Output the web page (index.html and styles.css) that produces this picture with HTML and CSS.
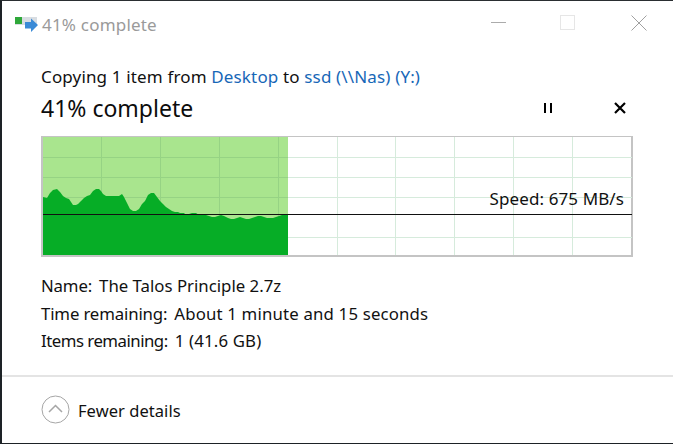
FILE: index.html
```html
<!DOCTYPE html>
<html lang="en">
<head>
<meta charset="utf-8">
<title>41% complete</title>
<link rel="stylesheet" href="styles.css">
</head>
<body>
<div class="window">
  <header class="titlebar">
    <svg class="app-icon" width="24" height="20" viewBox="0 0 24 20">
      <rect x="0" y="2" width="22" height="8" fill="#d8dde2"/>
      <rect x="0" y="2" width="7" height="7" fill="#2fa83a"/>
      <path d="M11 8h6V4.500l7 6.500-7 7v-3.500h-6z" fill="#3a8ad6" transform="translate(-1 -1)"/>
    </svg>
    <span class="title">41% complete</span>
    <div class="controls">
      <svg class="ctl" width="16" height="16" viewBox="0 0 16 16"><path d="M0 7.500h15" stroke="#ababab"/></svg>
      <svg class="ctl" width="16" height="16" viewBox="0 0 16 16"><rect x="0.500" y="0.500" width="14" height="14" fill="none" stroke="#e6e6e6"/></svg>
      <svg class="ctl ctl-close" width="16" height="16" viewBox="0 0 16 16"><path d="M0.500 0.500l15 15M15.500 0.500l-15 15" stroke="#a0a0a0"/></svg>
    </div>
  </header>
  <main class="content">
    <p class="copying">Copying 1 item from <a class="link">Desktop</a> to <a class="link">ssd (\\Nas) (Y:)</a></p>
    <div class="status-row">
      <h1 class="status">41% complete</h1>
      <div class="actions">
        <svg width="12" height="12" viewBox="0 0 12 12"><path d="M3 1v10M9 1v10" stroke="#000" stroke-width="2"/></svg>
        <svg width="14" height="14" viewBox="0 0 14 14"><path d="M2 2l10 10M12 2L2 12" stroke="#000" stroke-width="2.200"/></svg>
      </div>
    </div>
    <div class="graph">
      <svg class="graph-svg" width="589" height="118" viewBox="43 137 589 118" shape-rendering="crispEdges">
        <g class="grid-light">
          <path d="M43 157.500H632M43 177.500H632M43 197.500H632M43 237.500H632"/>
          <path d="M101.500 137V255M160.500 137V255M219.500 137V255M278.500 137V255M337.500 137V255M395.500 137V255M454.500 137V255M513.500 137V255M572.500 137V255"/>
        </g>
        <rect x="43" y="137" width="245" height="118" fill="#a9e58e"/>
        <g class="grid-dark">
          <path d="M43 157.500H288M43 177.500H288M43 197.500H288M43 237.500H288"/>
          <path d="M101.500 137V255M160.500 137V255M219.500 137V255M278.500 137V255"/>
        </g>
        <path shape-rendering="auto" fill="#06ad26" d="M43 197L47 198L50 193L53 190L57 189L60 192L63 196L66 198L69 199L71 202L73 205L76 205L78 204L81 201L84 198L87 196L90 195L93 191L96 189L99 189L101 191L103 194L106 196L112 196L119 196L122 194L124 197L127 203L130 209L133 211L136 211L139 209L142 204L145 201L148 195L151 193L154 193L157 197L160 201L163 204L166 207L169 209L172 211L175 212L178 212L180 213L184 213L186 215L189 214L192 213L196 213L199 215L203 214L206 215L209 216L212 217L215 217L218 216L221 215L224 216L228 218L231 219L234 219L237 218L240 217L243 218L246 219L249 219L252 218L255 217L258 216L261 216L264 217L267 218L270 218L273 218L276 217L279 216L282 215L285 214L288 215V255H43Z"/>
        <path class="limit" d="M43 214.500H632"/>
      </svg>
      <span class="speed">Speed: 675 MB/s</span>
    </div>
    <dl class="details">
      <div class="detail"><dt>Name:</dt><dd>The Talos Principle 2.7z</dd></div>
      <div class="detail"><dt>Time remaining:</dt><dd class="wide">About 1 minute and 15 seconds</dd></div>
      <div class="detail"><dt class="tight">Items remaining:</dt><dd class="wide">1 (41.6 GB)</dd></div>
    </dl>
  </main>
  <footer class="footer">
    <svg class="more-icon" width="30" height="30" viewBox="0 0 30 30"><circle cx="14.500" cy="14.500" r="13.500" fill="none" stroke="#a6a6a6"/><path d="M8 17L14.500 10.500L21 17" fill="none" stroke="#a6a6a6" stroke-width="1.500"/></svg>
    <span class="fewer">Fewer details</span>
  </footer>
</div>
</body>
</html>
```
FILE: styles.css
```css
* { box-sizing: border-box; }
html, body { margin: 0; padding: 0; }
body { width: 673px; height: 444px; overflow: hidden; background: #fff; font-family: "Noto Sans", "Open Sans", sans-serif; color: #111; }
.window { width: 673px; height: 444px; display: flex; flex-direction: column; border-top: 1px solid #2a2e31; border-left: 2px solid #1d2226; border-bottom: 1px solid #1d2226; }
.titlebar { height: 46px; display: flex; align-items: center; padding-left: 13px; flex: none; }
.app-icon { flex: none; margin-top: 1px; }
.title { margin-left: 3px; font-size: 17px; color: #9a9a9a; letter-spacing: 0.2px; }
.controls { margin-left: auto; display: flex; gap: 53px; padding-right: 26px; margin-bottom: 3px; }
.ctl { display: block; }
.ctl-close { margin-left: 2px; }
.content { padding: 19px 39px 0; flex: 1; }
.copying { margin: 0; font-size: 17px; line-height: 22px; letter-spacing: 0.15px; }
.link { color: #1767b7; }
.status-row { display: flex; align-items: center; height: 34px; margin-top: 3px; }
.status { margin: 0; font-size: 23px; font-weight: 400; color: #0c0c0c; }
.actions { margin-left: auto; display: flex; align-items: center; gap: 59px; padding-right: 7px; }
.actions svg { display: block; }
.graph { position: relative; width: 592px; height: 121px; margin-top: 11px; border: 2px solid #c4c4c4; border-width: 1px 2px 2px 2px; background: #fff; }
.graph-svg { display: block; }
.grid-light path { stroke: #d6ebdc; fill: none; }
.grid-dark path { stroke: #96d384; fill: none; }
.limit { stroke: #111; fill: none; }
.speed { position: absolute; right: 7px; top: 51px; font-size: 17px; line-height: 22px; letter-spacing: 0.1px; }
.details { margin: 15px 0 0; }
.detail { display: flex; gap: 7px; height: 27.500px; align-items: center; font-size: 16.800px; }
.detail dt, .detail dd { margin: 0; }
.detail dt { letter-spacing: -0.15px; }
.detail dt.tight { letter-spacing: -0.5px; }
.detail dd.wide { letter-spacing: 0.17px; }
.footer { height: 68px; flex: none; border-top: 2px solid #e4e4e4; display: flex; align-items: center; padding-left: 39px; gap: 7px; }
.more-icon { flex: none; }
.fewer { font-size: 16.500px; letter-spacing: 0.05px; }
```
